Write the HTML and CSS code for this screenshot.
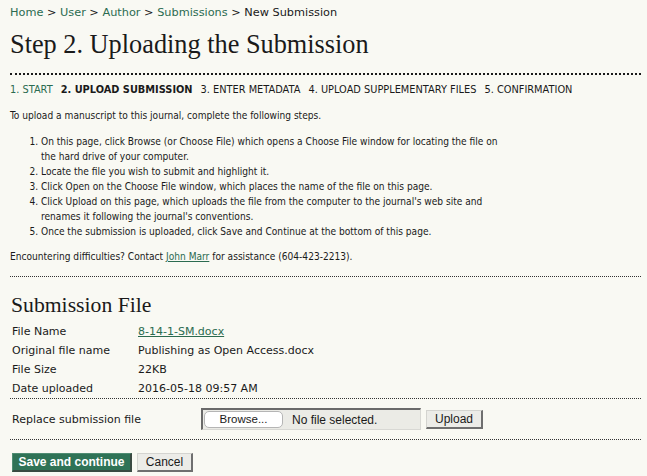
FILE: index.html
```html
<!DOCTYPE html>
<html>
<head>
<meta charset="utf-8">
<link rel="stylesheet" href="styles.css">
</head>
<body>
<div class="page">
  <div class="breadcrumb"><a href="#">Home</a> &gt; <a href="#">User</a> &gt; <a href="#">Author</a> &gt; <a href="#">Submissions</a> &gt; <span class="current">New Submission</span></div>
  <h1 class="title">Step 2. Uploading the Submission</h1>
  <div class="steps">
    <a href="#" class="step">1. Start</a>
    <span class="step active">2. Upload Submission</span>
    <span class="step">3. Enter Metadata</span>
    <span class="step">4. Upload Supplementary Files</span>
    <span class="step">5. Confirmation</span>
  </div>
  <p class="intro">To upload a manuscript to this journal, complete the following steps.</p>
  <ol class="instructions">
    <li>On this page, click Browse (or Choose File) which opens a Choose File window for locating the file on the hard drive of your computer.</li>
    <li>Locate the file you wish to submit and highlight it.</li>
    <li>Click Open on the Choose File window, which places the name of the file on this page.</li>
    <li>Click Upload on this page, which uploads the file from the computer to the journal's web site and renames it following the journal's conventions.</li>
    <li>Once the submission is uploaded, click Save and Continue at the bottom of this page.</li>
  </ol>
  <p class="help">Encountering difficulties? Contact <a href="#" class="ulink">John Marr</a> for assistance (604-423-2213).</p>
  <div class="sep sep-help"></div>
  <h2 class="subtitle">Submission File</h2>
  <table class="info">
    <tr><td class="label">File Name</td><td><a href="#" class="ulink">8-14-1-SM.docx</a></td></tr>
    <tr><td class="label">Original file name</td><td>Publishing as Open Access.docx</td></tr>
    <tr><td class="label">File Size</td><td>22KB</td></tr>
    <tr><td class="label">Date uploaded</td><td>2016-05-18 09:57 AM</td></tr>
  </table>
  <div class="sep"></div>
  <div class="replace">
    <div class="rlabel">Replace submission file</div>
    <div class="filebox"><span class="browse">Browse...</span><span class="nofile">No file selected.</span></div>
    <span class="btn upload">Upload</span>
  </div>
  <div class="sep"></div>
  <div class="actions">
    <span class="btn primary">Save and continue</span>
    <span class="btn cancel">Cancel</span>
  </div>
</div>
</body>
</html>
```
FILE: styles.css
```css
html, body {
  margin: 0;
  padding: 0;
  background: #f9f9f3;
}
body {
  font-family: "DejaVu Sans", Verdana, sans-serif;
  font-size: 11px;
  color: #1a1a1a;
}
.page {
  padding: 0 6px 0 10px;
}
a {
  color: #2b6b50;
  text-decoration: none;
}
.ulink {
  text-decoration: underline;
}
.breadcrumb {
  font-size: 11.3px;
  padding-top: 6px;
  line-height: 14px;
}
.title {
  font-family: "Liberation Serif", Georgia, serif;
  font-weight: normal;
  font-size: 26.3px;
  margin: 11px 0 0;
  line-height: 28px;
  padding-bottom: 14px;
  border-bottom: 2px dotted #1a1a1a;
}
.steps {
  font-size: 9.8px;
  text-transform: uppercase;
  margin-top: 9px;
  line-height: 12px;
  display: flex;
  gap: 8px;
}
.step.active {
  font-weight: bold;
}
.intro,
.instructions,
.help {
  font-family: "DejaVu Sans Condensed", "DejaVu Sans", sans-serif;
  font-stretch: condensed;
  font-size: 10.1px;
}
.intro {
  margin: 13px 0 0;
  line-height: 14px;
}
.instructions {
  margin: 11px 0 0;
  padding-left: 31px;
  line-height: 15px;
  max-width: 466px;
}
.help {
  margin: 11px 0 0;
  line-height: 14px;
}
.sep {
  border-top: 1px dotted #333;
}
.sep-help {
  margin-top: 12px;
}
.subtitle {
  font-family: "Liberation Serif", Georgia, serif;
  font-weight: normal;
  font-size: 21.7px;
  margin: 16px 0 0 1px;
  line-height: 24px;
}
.info {
  border-collapse: collapse;
  margin-top: 5px;
}
.info td {
  padding: 0 2px;
  height: 19px;
}
.info td.label {
  width: 122px;
}
.replace {
  display: flex;
  align-items: center;
  padding: 9px 0 9px 2px;
}
.rlabel {
  width: 189px;
}
.filebox {
  display: flex;
  align-items: center;
  width: 220px;
  height: 22px;
  background: #ebebe6;
  border: 1px solid #d8d8d4;
  border-top: 2px solid #6a6a6a;
  border-left: 2px solid #6a6a6a;
  box-sizing: border-box;
}
.browse {
  background: #fff;
  border: 1px solid #b5b5b5;
  border-radius: 5px;
  width: 79px;
  text-align: center;
  height: 17px;
  line-height: 15px;
  margin-left: 1px;
  box-sizing: border-box;
  font-family: "Liberation Sans", Arial, sans-serif;
  font-size: 11.5px;
}
.nofile {
  margin-left: 9px;
  font-family: "Liberation Sans", Arial, sans-serif;
  font-size: 12px;
}
.btn {
  display: inline-block;
  background: #ecece8;
  border: 1px solid #888;
  border-color: #d4d4d0 #6f6f6f #6f6f6f #d4d4d0;
  border-width: 1px 2px 2px 1px;
  height: 19px;
  line-height: 16px;
  box-sizing: border-box;
  font-family: "Liberation Sans", Arial, sans-serif;
  font-size: 12px;
  text-align: center;
}
.upload {
  margin-left: 5px;
  width: 57px;
}
.actions {
  display: flex;
  gap: 5px;
  padding: 13px 0 0 2px;
}
.btn.primary {
  width: 120px;
  background: #2f7356;
  color: #fff;
  font-weight: bold;
  border-color: #4f8c72 #3a4a42 #3a4a42 #4f8c72;
}
.btn.cancel {
  width: 56px;
}
```
